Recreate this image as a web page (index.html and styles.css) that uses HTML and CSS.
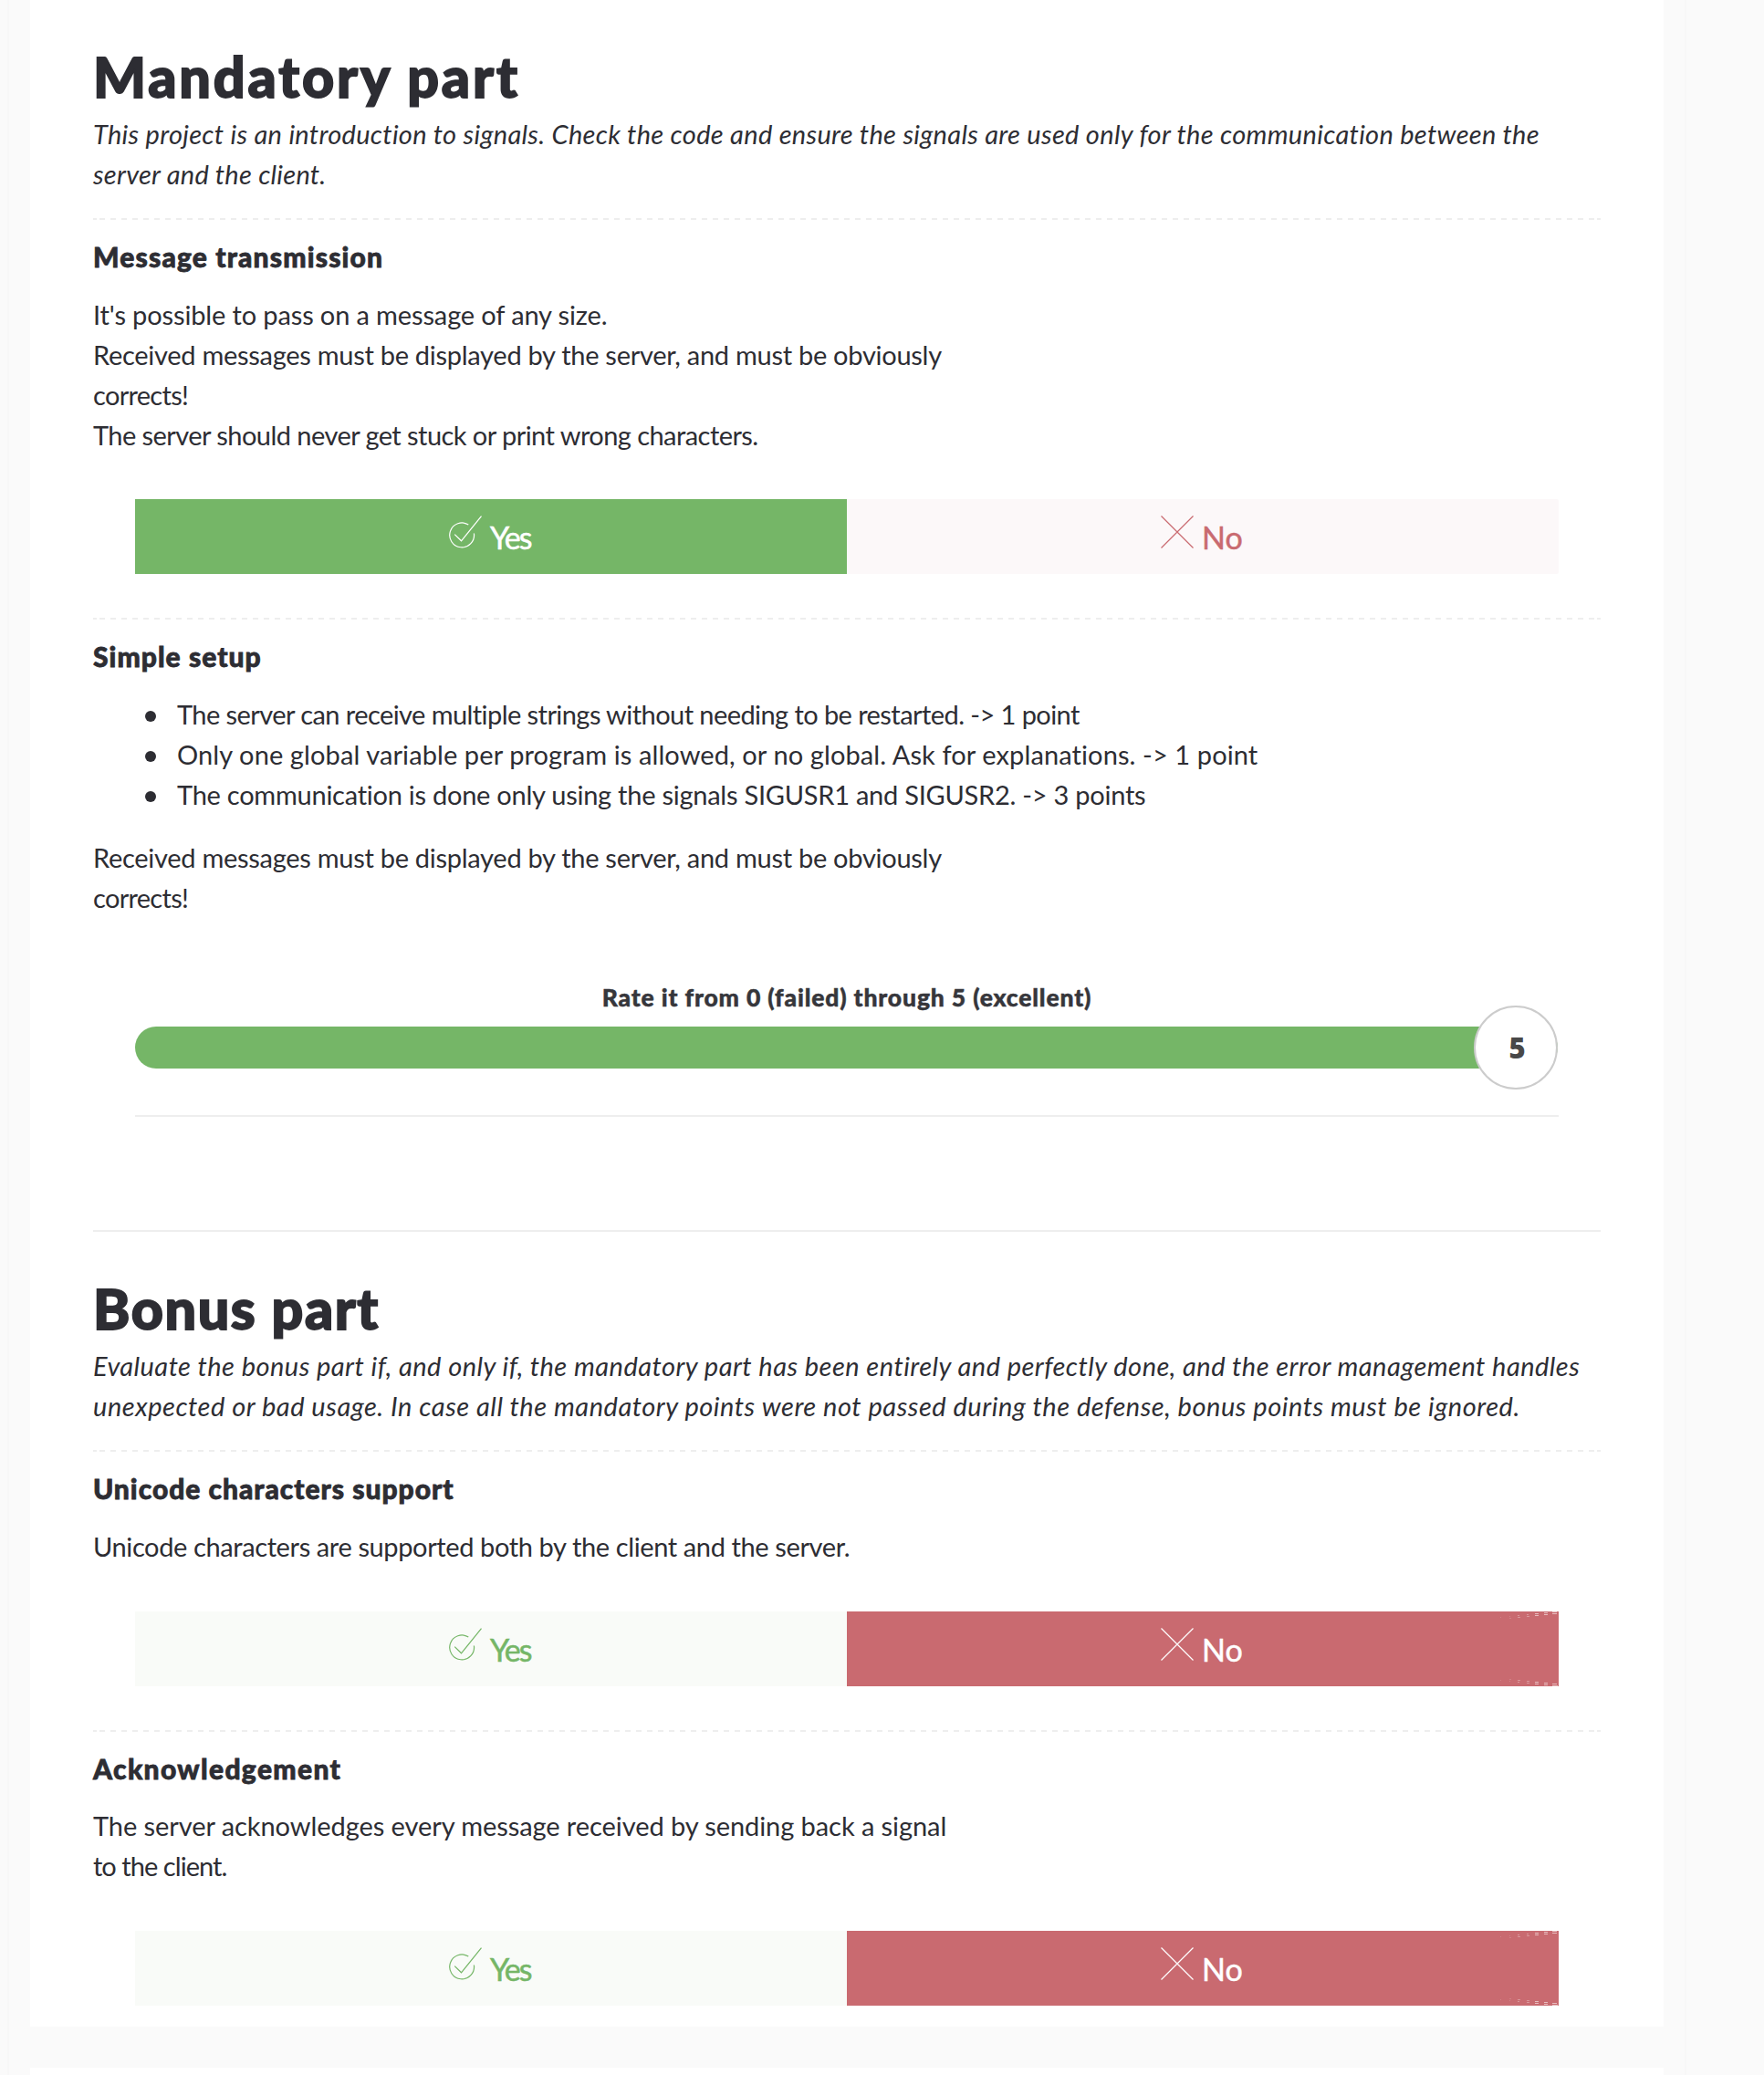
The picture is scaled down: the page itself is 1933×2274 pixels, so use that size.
FILE: index.html
```html
<!DOCTYPE html>
<html lang="en">
<head>
<meta charset="utf-8">
<title>Evaluation scale</title>
<link rel="stylesheet" href="styles.css">
</head>
<body>
<svg class="defs" aria-hidden="true">
  <symbol id="check" viewBox="0 0 36 36"><path d="M21.3 10.1A13.4 13.4 0 1 0 27.4 19.5M6.2 20.6L13.5 27.8L35.5.7"/></symbol>
  <symbol id="cross" viewBox="0 0 36 36"><path d="M.5.5L35.5 35.5M35.5.5L.5 35.5"/></symbol>
  <symbol id="stitch" viewBox="0 0 66 82">
    <path opacity=".15" d="M2 6.5h1M12 5.5h1M12 7.5h2M2 75.500h1M12 74.500h2M12 76.500h1"/>
    <path opacity=".3" d="M21 4.500h2M21 6.500h3M31 3.500h2M31 5.500h3M21 75.500h3M21 77.500h2M31 76.500h3M31 78.500h3"/>
    <path opacity=".55" d="M40 2.500h4M40 4.500h4M50 1.500h4M50 3.500h4M59 .5h5M59 2.500h5M40 77.500h4M40 79.500h4M50 78.500h4M50 80.500h4M59 79.500h5M59 81.500h6"/>
  </symbol>
</svg>
<div class="container">
  <main class="card">
    <section class="part">
      <h1 class="title ls-mandatory">Mandatory part</h1>
      <p class="intro">
        <span class="line ls-intro-a">This project is an introduction to signals. Check the code and ensure the signals are used only for the communication between the</span>
        <span class="line ls-intro-b">server and the client.</span>
      </p>
      <div class="dashed"></div>
      <h2 class="question ls-message">Message transmission</h2>
      <p class="text">
        <span class="line ls-possible">It's possible to pass on a message of any size.</span>
        <span class="line ls-received">Received messages must be displayed by the server, and must be obviously</span>
        <span class="line ls-corrects">corrects!</span>
        <span class="line ls-stuck">The server should never get stuck or print wrong characters.</span>
      </p>
      <div class="choices">
        <div class="choice yes selected"><svg class="icon"><use href="#check"/></svg><span class="label">Yes</span></div>
        <div class="choice no"><svg class="icon"><use href="#cross"/></svg><span class="label">No</span></div>
      </div>
      <div class="dashed"></div>
      <h2 class="question ls-setup">Simple setup</h2>
      <ul class="text list">
        <li class="ls-multiple">The server can receive multiple strings without needing to be restarted. -&gt; 1 point</li>
        <li class="ls-global">Only one global variable per program is allowed, or no global. Ask for explanations. -&gt; 1 point</li>
        <li class="ls-signals">The communication is done only using the signals SIGUSR1 and SIGUSR2. -&gt; 3 points</li>
      </ul>
      <p class="text after-list">
        <span class="line ls-received">Received messages must be displayed by the server, and must be obviously</span>
        <span class="line ls-corrects">corrects!</span>
      </p>
      <div class="rating">
        <div class="rating-label">Rate it from 0 (failed) through 5 (excellent)</div>
        <div class="slider"><div class="knob">5</div></div>
      </div>
    </section>
    <section class="part bonus">
      <h1 class="title ls-bonus">Bonus part</h1>
      <p class="intro">
        <span class="line ls-intro-c">Evaluate the bonus part if, and only if, the mandatory part has been entirely and perfectly done, and the error management handles</span>
        <span class="line ls-intro-d">unexpected or bad usage. In case all the mandatory points were not passed during the defense, bonus points must be ignored.</span>
      </p>
      <div class="dashed"></div>
      <h2 class="question ls-unicode">Unicode characters support</h2>
      <p class="text single"><span class="line ls-supported">Unicode characters are supported both by the client and the server.</span></p>
      <div class="choices">
        <div class="choice yes"><svg class="icon"><use href="#check"/></svg><span class="label">Yes</span></div>
        <div class="choice no selected"><svg class="icon"><use href="#cross"/></svg><span class="label">No</span><svg class="stitch"><use href="#stitch"/></svg></div>
      </div>
      <div class="dashed"></div>
      <h2 class="question ls-ack">Acknowledgement</h2>
      <p class="text">
        <span class="line ls-every">The server acknowledges every message received by sending back a signal</span>
        <span class="line ls-client">to the client.</span>
      </p>
      <div class="choices last">
        <div class="choice yes"><svg class="icon"><use href="#check"/></svg><span class="label">Yes</span></div>
        <div class="choice no selected"><svg class="icon"><use href="#cross"/></svg><span class="label">No</span><svg class="stitch"><use href="#stitch"/></svg></div>
      </div>
    </section>
  </main>
  <div class="card next"></div>
</div>
</body>
</html>
```
FILE: styles.css
```css
* { box-sizing: border-box; }
html, body { margin: 0; padding: 0; }
body {
  height: 2274px;
  overflow: hidden;
  background: #fafafa;
  color: #2d2d33;
  font-family: "Futura PT", Lato, sans-serif;
  font-size: 29px;
  line-height: 44px;
}
h1, h2, p, ul { margin: 0; padding: 0; }
.defs { position: absolute; width: 0; height: 0; }

.container {
  width: 1840px;
  height: 2274px;
  margin-left: 8px;
  padding: 0 23px;
  border: solid #f7f7f7;
  border-width: 0 2px;
}
.card { background: #fff; padding: 48px 69px 23px; }
.card.next { height: 8px; margin-top: 45px; padding: 0; }

.title {
  font-size: 61px;
  line-height: 72px;
  font-weight: 900;
  white-space: nowrap;
  -webkit-text-stroke: 1.8px #2d2d33;
}
.intro { margin-top: 5px; font-style: italic; }
.line { display: block; white-space: nowrap; }

.dashed {
  height: 2px;
  margin-top: 26px;
  background:
    linear-gradient(#eee, #eee) left / 4px 2px no-repeat,
    linear-gradient(#eee, #eee) right / 4px 2px no-repeat,
    repeating-linear-gradient(90deg, #eee 0 6px, transparent 6px 12px) 7px 0 / 1638px 2px no-repeat;
}
.choices + .dashed { margin-top: 48px; }

.question {
  margin-top: 18px;
  padding-bottom: 1px;
  font-size: 30px;
  line-height: 44px;
  font-weight: 900;
  white-space: nowrap;
  -webkit-text-stroke: .8px #2d2d33;
}
.text { margin-top: 18.5px; }
.text.single { padding-top: 1px; }
.text.after-list { margin-top: 25.500px; }

.list { list-style: none; }
.list li {
  display: flex;
  align-items: center;
  padding-left: 57px;
  white-space: nowrap;
}
.list li::before {
  content: "";
  width: 12px;
  height: 12px;
  margin: 4px 23px 0 0;
  border-radius: 50%;
  background: #2d2d33;
}

.choices { display: flex; margin: 48.500px 46px 0; height: 82px; }
.choice {
  position: relative;
  flex: 0 0 50%;
  display: flex;
  align-items: flex-start;
  justify-content: center;
  gap: 9px;
  padding: 18px 1px 0 0;
}
.label { margin-top: 4px; font-size: 34px; line-height: 40px; -webkit-text-stroke: .5px currentColor; }
.yes .label { width: 46px; letter-spacing: -1.8px; }
.no .label { width: 46px; }
.yes { background: #f9fbf8; color: #75b667; }
.no { background: #fcf8f9; color: #c96a70; border-radius: 0 2px 2px 0; }
.yes.selected { background: #75b667; color: #fff; }
.no.selected { background: #c96a70; color: #fff; border-radius: 0; }
.icon {
  width: 36px;
  height: 36px;
  fill: none;
  stroke: currentColor;
  stroke-width: 1.2;
}
.stitch {
  position: absolute;
  top: 0;
  right: 0;
  width: 66px;
  height: 82px;
  fill: none;
  stroke: #fff;
  stroke-width: 1;
}

.rating { margin: 70.500px 46px 0; padding-bottom: 51px; border-bottom: 2px solid #eee; }
.rating-label {
  font-size: 26.500px;
  line-height: 32px;
  font-weight: 900;
  letter-spacing: .85px;
  text-align: center;
  color: #36363b;
  white-space: nowrap;
  -webkit-text-stroke: .5px #36363b;
}
.slider {
  display: flex;
  align-items: center;
  justify-content: flex-end;
  height: 46px;
  margin: 16px 1px 0 0;
  border-radius: 23px;
  background: #75b667;
}
.knob {
  width: 92px;
  height: 92px;
  border: 2px solid #ccc;
  border-radius: 50%;
  background: #fff;
  color: #484848;
  font: 800 31px/88px "Open Sans", sans-serif;
  text-align: center;
  padding-left: 3px;
}
.bonus { margin-top: 124px; padding-top: 48px; border-top: 2px solid #eee; }

.ls-mandatory { letter-spacing: 2.900px; }
.ls-bonus { letter-spacing: 1.600px; }
.ls-intro-a { letter-spacing: .308px; }
.ls-intro-b { letter-spacing: .25px; }
.ls-intro-c { letter-spacing: .475px; }
.ls-intro-d { letter-spacing: .53px; }
.ls-message { letter-spacing: 1.170px; }
.ls-setup { letter-spacing: 1.05px; }
.ls-unicode { letter-spacing: .99px; }
.ls-ack { letter-spacing: 1.350px; }
.ls-possible { letter-spacing: -.13px; }
.ls-received { letter-spacing: -.28px; }
.ls-corrects { letter-spacing: -.7px; }
.ls-stuck { letter-spacing: -.555px; }
.ls-multiple { letter-spacing: -.57px; }
.ls-global { letter-spacing: .1px; }
.ls-signals { letter-spacing: -.25px; }
.ls-supported { letter-spacing: -.385px; }
.ls-every { letter-spacing: -.07px; }
.ls-client { letter-spacing: -.95px; }
```
